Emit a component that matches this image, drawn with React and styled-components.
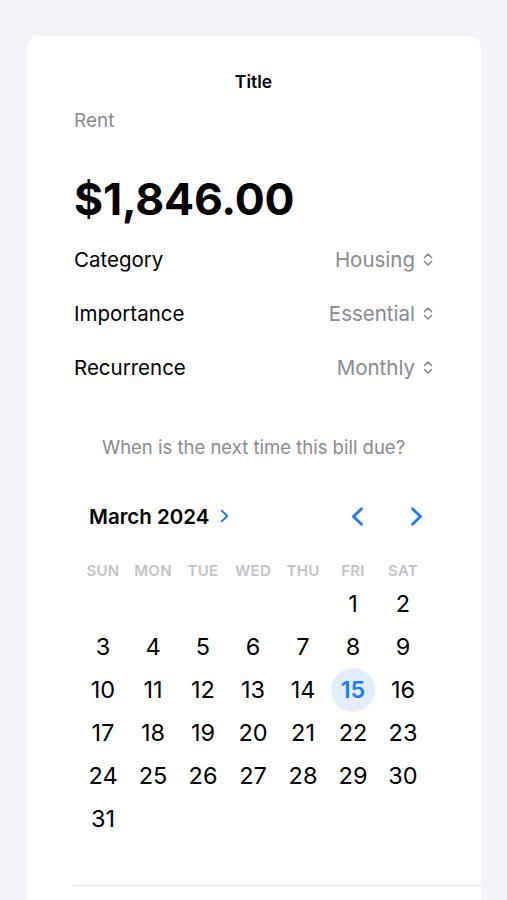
import React from 'react';
import styled, { createGlobalStyle } from 'styled-components';

const GlobalStyle = createGlobalStyle`
    html, body {
        margin: 0;
        padding: 0;
        background: #f2f2f7;
        font-family: Inter, "Noto Sans", "Liberation Sans", sans-serif;
        -webkit-font-smoothing: antialiased;
    }
`;

const Page = styled.div`
    padding: 36px 26px 0 27px;
    height: 864px;
    overflow: hidden;
`;

const Card = styled.div`
    background: #ffffff;
    border-radius: 12px 12px 0 0;
    padding: 35px 48px 0 47px;
    min-height: 900px;
`;

const Title = styled.div`
    text-align: center;
    font-size: 17.5px;
    line-height: 22px;
    font-weight: 600;
    color: #000;
`;

const Subtitle = styled.div`
    margin-top: 16px;
    font-size: 19px;
    line-height: 24px;
    color: #8a8a8e;
`;

const Amount = styled.div`
    margin-top: 40px;
    font-size: 44.5px;
    line-height: 52px;
    font-weight: 700;
    letter-spacing: -0.2px;
    color: #000;
`;

const Fields = styled.div`
    margin-top: 7px;
`;

const Row = styled.div`
    display: flex;
    align-items: center;
    justify-content: space-between;
    height: 54px;
    font-size: 20.5px;
`;

const Label = styled.span`
    color: #000;
`;

const Value = styled.span`
    display: flex;
    align-items: center;
    gap: 8px;
    color: #8a8a8e;
`;

const Question = styled.div`
    margin-top: 42px;
    text-align: center;
    font-size: 18.5px;
    line-height: 22px;
    color: #8a8a8e;
`;

const Calendar = styled.div`
    margin-top: 36px;
`;

const Header = styled.div`
    display: flex;
    align-items: center;
    justify-content: space-between;
    height: 44px;
    padding: 0 10px 0 15px;
`;

const MonthLabel = styled.div`
    display: flex;
    align-items: center;
    gap: 11px;
    font-size: 20.5px;
    font-weight: 600;
    color: #000;
`;

const Nav = styled.div`
    display: flex;
    align-items: center;
    gap: 46px;
`;

const NavButton = styled.button`
    border: none;
    background: none;
    padding: 0;
    display: flex;
    align-items: center;
    cursor: pointer;
`;

const Grid = styled.div`
    display: grid;
    grid-template-columns: repeat(7, 50px);
    margin: 22px 0 0 4px;
`;

const WeekDay = styled.div`
    height: 22px;
    line-height: 22px;
    text-align: center;
    font-size: 15px;
    font-weight: 600;
    color: #c3c3c7;
    letter-spacing: 0.3px;
`;

const Day = styled.div`
    height: 43px;
    display: flex;
    align-items: center;
    justify-content: center;
`;

const DayNumber = styled.span`
    width: 44px;
    height: 44px;
    border-radius: 50%;
    display: flex;
    align-items: center;
    justify-content: center;
    font-size: 23.5px;
    font-weight: ${p => (p.selected ? 600 : 400)};
    color: ${p => (p.selected ? '#1a7cf5' : '#000')};
    background: ${p => (p.selected ? '#e2eefd' : 'transparent')};
`;

const Divider = styled.div`
    margin: 45px -48px 0 0;
    height: 1px;
    background: #e5e5ea;
`;

const UpDown = () => (
    <svg width="10" height="15" viewBox="0 0 10 15" fill="none" stroke="#8a8a8e" strokeWidth="1.6" strokeLinecap="round" strokeLinejoin="round">
        <polyline points="1.5,5.5 5,2 8.5,5.5" />
        <polyline points="1.5,9.5 5,13 8.5,9.5" />
    </svg>
);

const Chevron = ({ dir = 'right', w = 13, h = 19 }) => (
    <svg width={w} height={h} viewBox="0 0 13 19" fill="none" stroke="#1a7cf5" strokeWidth="2.8" strokeLinecap="round" strokeLinejoin="round">
        {dir === 'right'
            ? <polyline points="2.5,1.8 10.5,9.5 2.5,17.2" />
            : <polyline points="10.5,1.8 2.5,9.5 10.5,17.2" />}
    </svg>
);

const WEEKDAYS = ['SUN', 'MON', 'TUE', 'WED', 'THU', 'FRI', 'SAT'];
const FIELDS = [
    { label: 'Category', value: 'Housing' },
    { label: 'Importance', value: 'Essential' },
    { label: 'Recurrence', value: 'Monthly' },
];

// March 2024 starts on a Friday
const cells = [...Array(5).fill(null), ...Array.from({ length: 31 }, (_, i) => i + 1)];

export default function App() {
    const selected = 15;
    return (
        <>
            <GlobalStyle />
            <Page>
                <Card>
                    <Title>Title</Title>
                    <Subtitle>Rent</Subtitle>
                    <Amount>$1,846.00</Amount>
                    <Fields>
                        {FIELDS.map(f => (
                            <Row key={f.label}>
                                <Label>{f.label}</Label>
                                <Value>{f.value}<UpDown /></Value>
                            </Row>
                        ))}
                    </Fields>
                    <Question>When is the next time this bill due?</Question>
                    <Calendar>
                        <Header>
                            <MonthLabel>
                                March 2024
                                <Chevron dir="right" w={9} h={14} />
                            </MonthLabel>
                            <Nav>
                                <NavButton><Chevron dir="left" /></NavButton>
                                <NavButton><Chevron dir="right" /></NavButton>
                            </Nav>
                        </Header>
                        <Grid>
                            {WEEKDAYS.map(d => <WeekDay key={d}>{d}</WeekDay>)}
                            {cells.map((d, i) => (
                                <Day key={i}>
                                    {d && <DayNumber selected={d === selected}>{d}</DayNumber>}
                                </Day>
                            ))}
                        </Grid>
                    </Calendar>
                    <Divider />
                </Card>
            </Page>
        </>
    );
}
